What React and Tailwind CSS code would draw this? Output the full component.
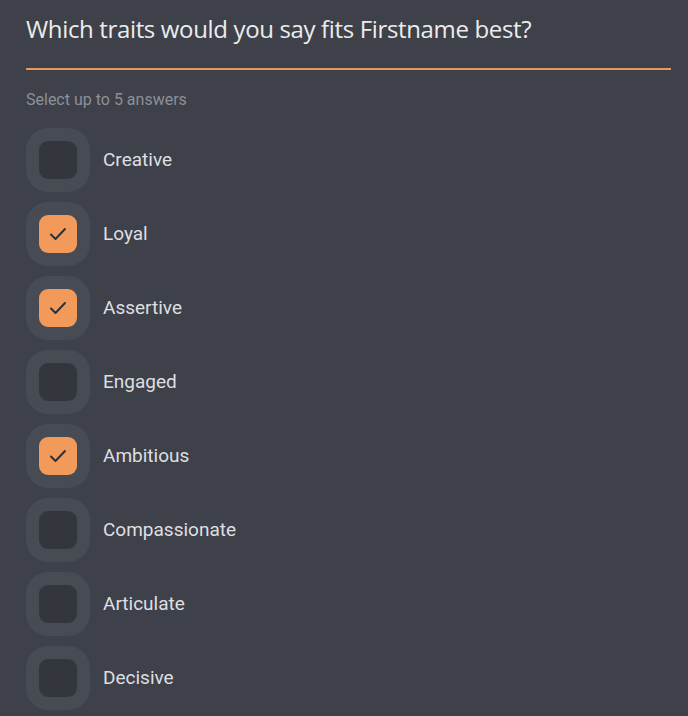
import React, { useState } from 'react';

const TRAITS = ['Creative', 'Loyal', 'Assertive', 'Engaged', 'Ambitious', 'Compassionate', 'Articulate', 'Decisive'];

const CheckIcon = () => (
    <svg width="22" height="22" viewBox="0 0 22 22" fill="none">
        <path d="M4 11.5l4.5 4.5 9.5-10" stroke="#2e3137" strokeWidth="2" strokeLinecap="round" strokeLinejoin="round" />
    </svg>
);

const App = () => {
    const [selected, setSelected] = useState(['Loyal', 'Assertive', 'Ambitious']);

    const toggle = (trait) => {
        setSelected(prev => prev.includes(trait) ? prev.filter(t => t !== trait) : prev.length < 5 ? [...prev, trait] : prev);
    };

    return (
        <div className="min-h-screen w-full bg-[#3e4149] px-[26px] pt-[13px] pb-4 font-['Roboto',sans-serif]">
            <h1 className="text-[24px] leading-[32px] text-[#ececec] font-['Open_Sans',sans-serif] tracking-[-0.35px]">
                Which traits would you say fits Firstname best?
            </h1>
            <div className="mt-[23px] h-[2px] w-[645px] bg-[#ef9657]" />
            <p className="mt-[20px] text-[16px] leading-5 text-[#8d9097]">Select up to 5 answers</p>

            <div className="mt-[18px] flex flex-col gap-[10px]">
                {TRAITS.map(trait => {
                    const checked = selected.includes(trait);
                    return (
                        <button key={trait} onClick={() => toggle(trait)} className="flex items-center gap-[13px] text-left">
                            <span className="flex h-[64px] w-[64px] items-center justify-center rounded-[22px] bg-[#474b54]">
                                <span className={`flex h-[38px] w-[38px] items-center justify-center rounded-[9px] ${checked ? 'bg-[#f19a5a]' : 'bg-[#33363d]'}`}>
                                    {checked && <CheckIcon />}
                                </span>
                            </span>
                            <span className="text-[19px] font-normal text-[#dedfe1]">{trait}</span>
                        </button>
                    );
                })}
            </div>
        </div>
    );
};

export default App;
